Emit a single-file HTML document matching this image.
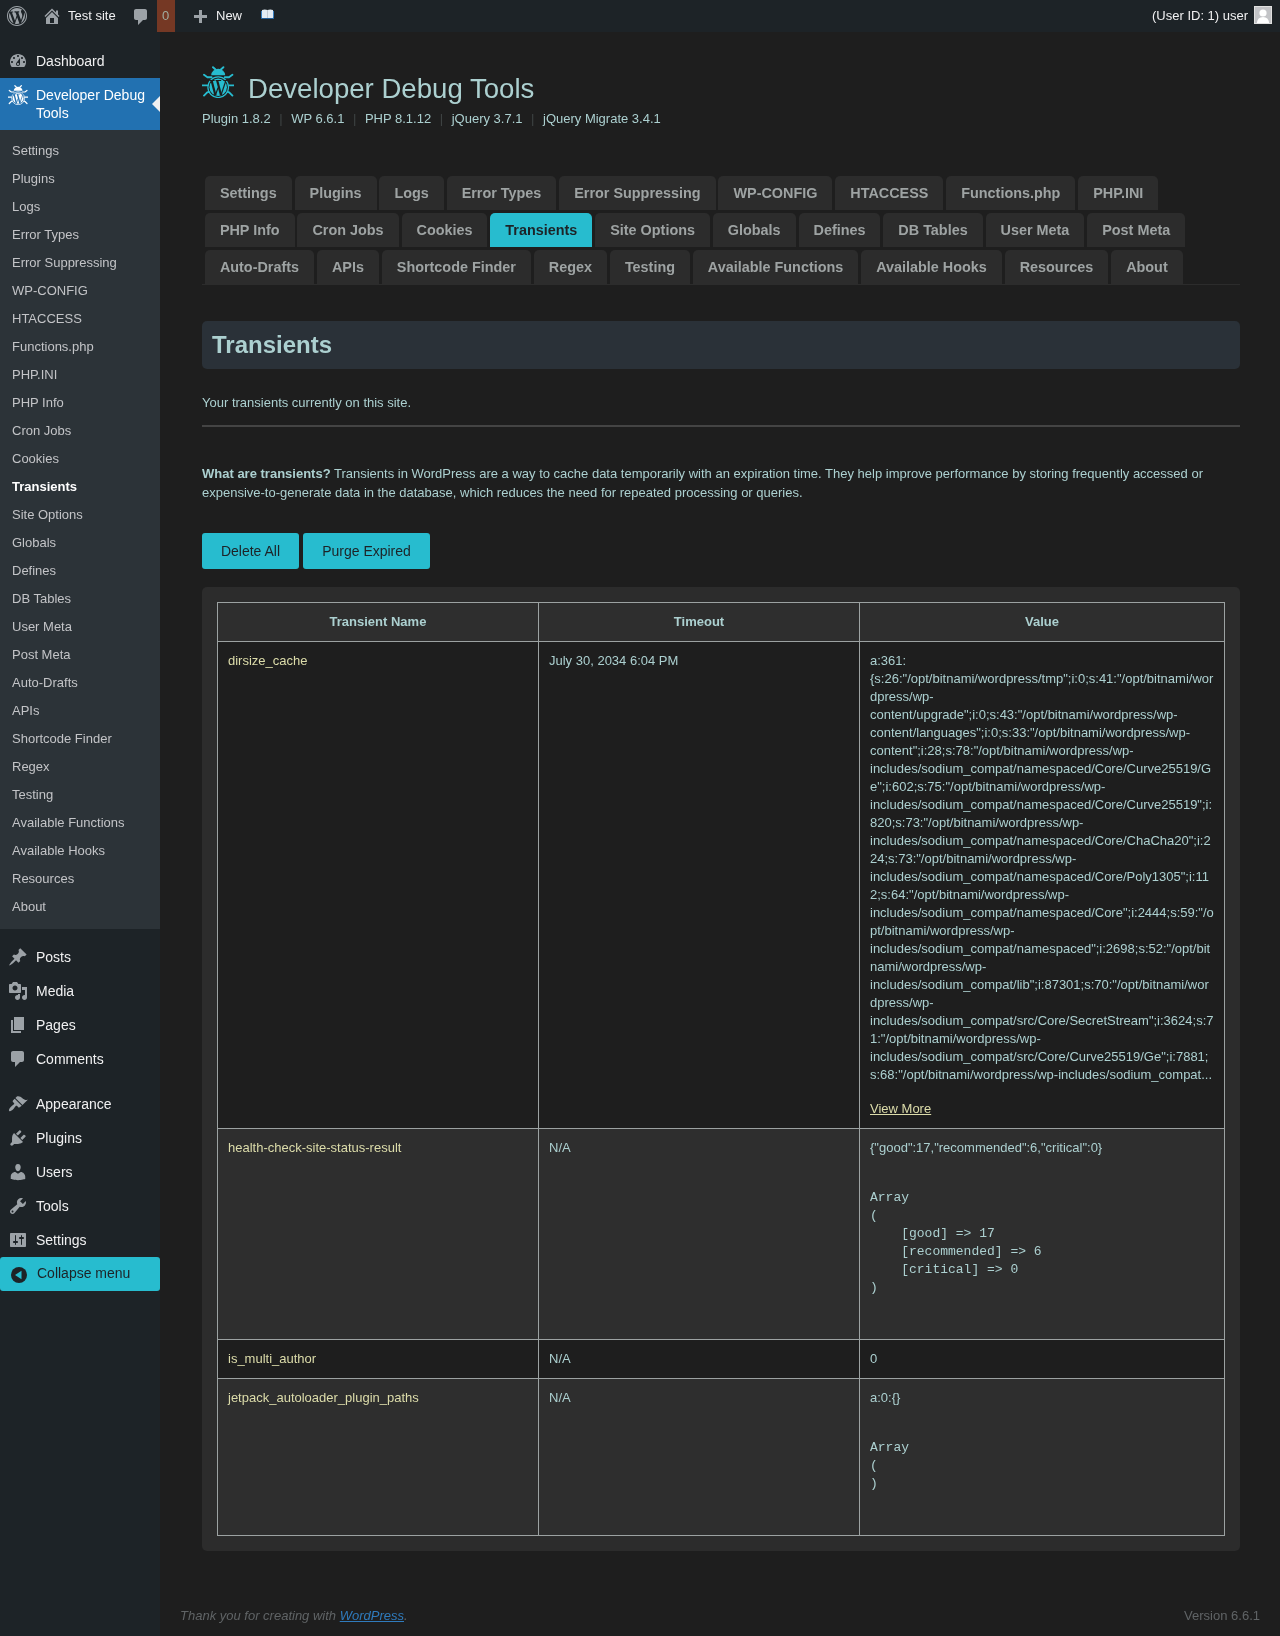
<!DOCTYPE html>
<html>
<head>
<meta charset="utf-8">
<style>
*{box-sizing:border-box;}
html,body{margin:0;padding:0;}
body{width:1280px;height:1636px;overflow:hidden;background:#1e1e1e;font-family:"Liberation Sans",sans-serif;font-size:13px;color:#acd0d0;position:relative;}
#ab{position:absolute;left:0;top:0;width:1280px;height:32px;background:#1d2327;color:#f0f0f1;}
#ab .t{position:absolute;top:7px;line-height:18px;font-size:13px;white-space:nowrap;}
#ab svg{position:absolute;}
#menu{position:absolute;left:0;top:32px;width:160px;height:1604px;background:#1d2327;}
.mi{position:absolute;left:0;width:160px;height:34px;color:#f0f0f1;font-size:14px;line-height:18px;}
.mi .n{position:absolute;left:36px;top:8px;white-space:nowrap;}
.mi svg{position:absolute;left:8px;top:7px;}
#sub{position:absolute;left:0;top:98px;width:160px;height:799px;background:#2c3338;}
#sub div{position:absolute;left:12px;height:28px;line-height:18px;font-size:13px;color:#c3c4c7;white-space:nowrap;}
#content{position:absolute;left:202px;top:0;width:1038px;}
.abs{position:absolute;white-space:nowrap;}
#title{position:absolute;left:46px;top:73px;font-size:27.6px;line-height:32px;color:#acd0d0;white-space:nowrap;}
#ver{position:absolute;left:0;top:110px;line-height:18px;font-size:13px;color:#acd0d0;white-space:nowrap;}
#ver .s{display:inline-block;width:20.5px;text-align:center;color:#3e4444;}
#tabs{position:absolute;left:0;top:173px;width:1038px;border-bottom:1px solid #2c2c2c;}
#tabs:after{content:"";display:block;clear:both;}
.tab{float:left;margin:3px 0 0 2.88px;padding:5px 15px;line-height:24px;font-size:14.4px;font-weight:bold;color:#9ea3a3;background:#2c2c2c;border-radius:5px 5px 0 0;white-space:nowrap;}
.tab.on{background:#27bccf;color:#1d2327;}
#hbox{position:absolute;left:0;top:321px;width:1038px;height:48px;background:#2a3138;border-radius:5px;}
#hbox div{position:absolute;left:10px;top:0;font-size:24px;line-height:48px;font-weight:bold;color:#acd0d0;}
#p1{position:absolute;left:0;top:393px;line-height:19px;}
#hr{position:absolute;left:0;top:425px;width:1038px;height:2px;background:#444;}
#p2{position:absolute;left:0;top:463.5px;width:1038px;line-height:19px;}
.btn{position:absolute;top:533px;height:36px;line-height:36px;font-size:14px;color:#1d2327;background:#27bccf;border-radius:3px;text-align:center;white-space:nowrap;}

#tbl{position:absolute;left:15px;top:15px;width:1007px;border-collapse:collapse;table-layout:fixed;}
#tbl td,#tbl th{border:1px solid #9ca2a2;padding:10px;vertical-align:top;line-height:18px;font-size:13px;text-align:left;color:#acd0d0;}
#tbl th{text-align:center;font-weight:bold;background:#2e2e2e;}
#tbl tr.d td{background:#1e1e1e;}
#tbl tr.l td{background:#2e2e2e;}
#tbl td.nm{color:#dcdcaa;}
#tbl .nw{white-space:nowrap;}
#tbl pre{margin:32px 0;font-family:"Liberation Mono",monospace;font-size:13px;line-height:18px;}
#tbl a{color:#dcdcaa;text-decoration:underline;}
#foot{position:absolute;left:180px;top:1607px;line-height:18px;font-size:13px;font-style:italic;color:#606466;white-space:nowrap;}
#foot a{color:#2f7bbd;text-decoration:underline;}
#ver2{position:absolute;right:20px;top:1607px;line-height:18px;font-size:13px;color:#606466;white-space:nowrap;}
#tbox{position:absolute;left:0;top:587px;width:1038px;height:964px;background:#2c2c2c;border-radius:5px;}

</style>
</head>
<body>
<div id="wrapall" style="position:absolute;left:0;top:0;width:1280px;height:1636px;overflow:hidden;will-change:transform;">
<div id="ab">
<svg style="left:7px;top:6px" width="20" height="20" viewBox="0 0 20 20"><path fill="#9ca2a7" d="M20 10c0-5.52-4.48-10-10-10S0 4.48 0 10s4.48 10 10 10 10-4.48 10-10zM10 1.01c4.97 0 8.99 4.02 8.99 8.99s-4.02 8.99-8.99 8.99S1.01 14.97 1.01 10 5.030 1.01 10 1.01zM8.01 14.82L4.96 6.61c.49-.03 1.05-.08 1.05-.08.43-.05.38-1.010-.06-.99 0 0-1.29.1-2.13.1-.15 0-.33 0-.52-.01 1.44-2.170 3.9-3.6 6.7-3.6 2.09 0 3.990.79 5.41 2.09-.6-.08-1.45.35-1.45 1.42 0 .66.38 1.22.79 1.88.31.54.5 1.22.5 2.21 0 1.34-1.27 4.48-1.27 4.48l-2.71-7.5c.48-.03.75-.16.75-.16.43-.05.38-1.1-.05-1.08 0 0-1.3.11-2.14.11-.78 0-2.11-.11-2.11-.11-.43-.02-.48 1.06-.05 1.08l.84.08 1.12 3.04zm6.02 2.15L16.64 10s.67-1.69.39-3.81c.63 1.14.94 2.42.94 3.81 0 2.96-1.56 5.58-3.94 6.97zM2.68 6.77L6.5 17.25c-2.67-1.3-4.47-4.08-4.47-7.25 0-1.16.2-2.23.65-3.23zm7.45 4.53l2.29 6.25c-.75.27-1.57.42-2.42.42-.72 0-1.41-.11-2.060-.3z"/></svg>
<svg style="left:42px;top:6px" width="20" height="20" viewBox="0 0 20 20"><path fill="#9ca2a7" d="M16 8.5l1.53 1.53-1.06 1.06L10 4.62l-6.47 6.47-1.06-1.06L10 2.5l4 4v-2h2v4zm-6-2.46l6 5.99V18H4v-5.97zM12 17v-5H8v5h4z"/></svg>
<div class="t" style="left:68px">Test site</div>
<svg style="left:131px;top:7px" width="20" height="20" viewBox="0 0 20 20"><path fill="#9ca2a7" d="M5 2h9c1.1 0 2 .9 2 2v7c0 1.1-.9 2-2 2h-2l-5 5v-5H5c-1.1 0-2-.9-2-2V4c0-1.1.9-2 2-2z"/></svg>
<div style="position:absolute;left:157px;top:0;width:18px;height:32px;background:#753824;"></div>
<div class="t" style="left:160.5px;width:10px;text-align:center;color:#a0aca0">0</div>
<svg style="left:194px;top:10px" width="13" height="13" viewBox="0 0 13 13"><path fill="#9ca2a7" d="M5 0 H8 V5 H13 V8 H8 V13 H5 V8 H0 V5 H5 Z"/></svg>
<div class="t" style="left:216px">New</div>
<svg style="left:261px;top:9px" width="13" height="10" viewBox="0 0 13 10"><path fill="#3a7fc0" d="M0 2 H13 V9 Q13 10 12 10 H1 Q0 10 0 9 Z"/><path fill="#245f99" d="M0 8.6 H13 V9 Q13 10 12 10 H1 Q0 10 0 9 Z"/><path fill="#e4ecf4" d="M1 1 Q3.8 0 6.5 1 V9 H1 Z M6.5 1 Q9.2 0 12 1 V9 H6.5 Z"/><path stroke="#a9b4bd" stroke-width="0.6" d="M6.5 1 V9"/></svg>
<div class="t" style="left:1152px">(User ID: 1) user</div>
<div style="position:absolute;left:1254px;top:6px;width:18px;height:18px;background:#c3c4c7;border:1px solid #e0e0e0;overflow:hidden"><svg width="16" height="16" viewBox="0 0 16 16" style="position:absolute;left:0;top:0"><circle cx="8" cy="6" r="3.6" fill="#fff"/><path d="M1.8 16 Q2.5 10 8 10 Q13.5 10 14.2 16 Z" fill="#fff"/></svg></div>
</div>
<div id="menu"><div class="mi" style="top:12px"><svg width="20" height="20" viewBox="0 0 20 20"><path fill="#9ca2a7" d="M3.76 16h12.48c1.1-1.37 1.76-3.11 1.76-5 0-4.42-3.58-8-8-8s-8 3.58-8 8c0 1.890.66 3.63 1.76 5zM10 4c.55 0 1 .45 1 1s-.45 1-1 1-1-.45-1-1 .45-1 1-1zM6 6c.55 0 1 .45 1 1s-.45 1-1 1-1-.45-1-1 .45-1 1-1zm8 0c.55 0 1 .45 1 1s-.45 1-1 1-1-.45-1-1 .45-1 1-1zm-5.37 5.55L12 7v6c0 1.1-.9 2-2 2s-2-.9-2-2c0-.57.24-1.08.63-1.45zM4 10c.55 0 1 .45 1 1s-.45 1-1 1-1-.45-1-1 .45-1 1-1zm12 0c.55 0 1 .45 1 1s-.45 1-1 1-1-.45-1-1 .45-1 1-1zm-5 3c0-.55-.45-1-1-1s-1 .45-1 1 .45 1 1 1 1-.45 1-1z"/></svg><div class="n">Dashboard</div></div><div class="mi" style="top:46px;height:52px;background:#2271b1;color:#fff"><svg width="20" height="20" viewBox="0 0 32 32" style="left:8px;top:7px"><g fill="none" stroke="#fff" stroke-width="1.9" stroke-linecap="round" stroke-linejoin="round"><path d="M11 1.2 L13.5 3.5 M21.4 1.2 L18.9 3.5 M2 8.8 L5.4 11.2 L9.6 11.2 M30.4 8.8 L27 11.2 L22.8 11.2 M0.6 19.4 L5.2 19.4 M31.8 19.4 L27.2 19.4 M2 29.6 L5.2 26.4 L6.8 25.8 M30.4 29.6 L27.2 26.4 L25.6 25.8"/></g><path fill="#fff" d="M9.2 9.2 A7 6.4 0 0 1 23.2 9.2 Z"/><circle cx="16.2" cy="21.2" r="10.3" fill="none" stroke="#fff" stroke-width="1.2"/><circle cx="16.2" cy="21.2" r="8.7" fill="#fff"/><g stroke="#2271b1" fill="none" stroke-linejoin="miter"><path d="M7.6 14.5 H12.6 M13.6 14.5 H19.2 M21.4 14.5 H25" stroke-width="1"/><path d="M9.6 14.5 L13.4 29.2" stroke-width="2.2"/><path d="M15.2 14.5 L19 29.2" stroke-width="2.2"/><path d="M13.4 29.2 L16.1 21.6" stroke-width="1.2"/><path d="M19 29.2 L23.6 15.4" stroke-width="1.2"/></g></svg><div class="n" style="width:120px;white-space:normal">Developer Debug Tools</div><div style="position:absolute;right:0;top:18px;width:0;height:0;border:8px solid transparent;border-right-color:#f0f0f1"></div></div><div id="sub"><div style="top:12px">Settings</div><div style="top:40px">Plugins</div><div style="top:68px">Logs</div><div style="top:96px">Error Types</div><div style="top:124px">Error Suppressing</div><div style="top:152px">WP-CONFIG</div><div style="top:180px">HTACCESS</div><div style="top:208px">Functions.php</div><div style="top:236px">PHP.INI</div><div style="top:264px">PHP Info</div><div style="top:292px">Cron Jobs</div><div style="top:320px">Cookies</div><div style="top:348px;color:#fff;font-weight:bold">Transients</div><div style="top:376px">Site Options</div><div style="top:404px">Globals</div><div style="top:432px">Defines</div><div style="top:460px">DB Tables</div><div style="top:488px">User Meta</div><div style="top:516px">Post Meta</div><div style="top:544px">Auto-Drafts</div><div style="top:572px">APIs</div><div style="top:600px">Shortcode Finder</div><div style="top:628px">Regex</div><div style="top:656px">Testing</div><div style="top:684px">Available Functions</div><div style="top:712px">Available Hooks</div><div style="top:740px">Resources</div><div style="top:768px">About</div></div><div class="mi" style="top:908px"><svg width="20" height="20" viewBox="0 0 20 20"><path fill="#9ca2a7" d="M10.44 3.02l1.82-1.82 6.36 6.35-1.83 1.82c-1.050-.68-2.480-.57-3.410.36l-.75.75c-.92.93-1.040 2.350-.35 3.410l-1.830 1.820-2.410-2.410-2.800 2.790c-.42.42-3.380 2.710-3.800 2.290s1.860-3.390 2.280-3.810l2.790-2.790L4.100 9.360l1.830-1.820c1.050.69 2.480.57 3.400-.36l.75-.75c.93-.92 1.050-2.350.36-3.410z"/></svg><div class="n">Posts</div></div><div class="mi" style="top:942px"><svg width="20" height="20" viewBox="0 0 20 20"><path fill="#9ca2a7" d="M13 11V4c0-.55-.45-1-1-1h-1.67L9 1H5L3.67 3H2c-.55 0-1 .45-1 1v7c0 .55.45 1 1 1h10c.55 0 1-.45 1-1zM7 4.5c1.38 0 2.5 1.12 2.5 2.5S8.38 9.5 7 9.5 4.5 8.38 4.5 7 5.62 4.5 7 4.5zM14 6h5v10.5c0 1.38-1.12 2.5-2.5 2.5S14 17.88 14 16.5s1.12-2.5 2.5-2.5c.17 0 .34.02.5.05V9h-3V6zm-4 8.05V13h2v3.5c0 1.38-1.12 2.5-2.5 2.5S7 17.880 7 16.5 8.12 14 9.5 14c.17 0 .34.02.5.05z"/></svg><div class="n">Media</div></div><div class="mi" style="top:976px"><svg width="20" height="20" viewBox="0 0 20 20"><path fill="#9ca2a7" d="M6 15V2h10v13H6zm-1 1h8v2H3V5h2v11z"/></svg><div class="n">Pages</div></div><div class="mi" style="top:1010px"><svg width="20" height="20" viewBox="0 0 20 20"><path fill="#9ca2a7" d="M5 2h9c1.1 0 2 .9 2 2v7c0 1.1-.9 2-2 2h-2l-5 5v-5H5c-1.1 0-2-.9-2-2V4c0-1.1.9-2 2-2z"/></svg><div class="n">Comments</div></div><div class="mi" style="top:1055px"><svg width="20" height="20" viewBox="0 0 20 20"><path fill="#9ca2a7" d="M14.48 11.06L7.41 3.99l1.5-1.5c.5-.56 2.3-.47 3.51.32 1.21.8 1.43 1.28 2.91 2.1 1.18.64 2.45 1.26 4.45.85zm-.71.71L6.7 4.7 4.93 6.47c-.39.39-.39 1.02 0 1.41l1.06 1.06c.39.39.39 1.03 0 1.42-.6.6-1.43 1.11-2.21 1.69-.35.26-.7.53-1.01.84C1.43 14.23.4 16.08 1.2 16.89c.8.79 2.65-.23 4.01-1.57.31-.31.58-.66.85-1.02.57-.78 1.08-1.61 1.69-2.21.39-.39 1.02-.39 1.41 0l1.06 1.06c.39.39 1.02.39 1.41 0z"/></svg><div class="n">Appearance</div></div><div class="mi" style="top:1089px"><svg width="20" height="20" viewBox="0 0 20 20"><path fill="#9ca2a7" d="M13.11 4.36L9.87 7.6 8 5.73l3.24-3.24c.35-.34 1.05-.2 1.56.32.52.51.66 1.21.31 1.55zm-8 1.77l.91-1.12 9.01 9.01-1.19.84c-.71.71-2.630 1.16-3.820 1.16H6.14L4.9 17.26c-.59.59-1.54.59-2.12 0-.59-.58-.59-1.53 0-2.12l1.24-1.24v-3.88c0-1.13.4-3.19 1.09-3.89zm7.26 3.97l3.24-3.24c.34-.35 1.04-.21 1.55.31.52.51.66 1.21.31 1.55l-3.24 3.25z"/></svg><div class="n">Plugins</div></div><div class="mi" style="top:1123px"><svg width="20" height="20" viewBox="0 0 20 20"><path fill="#9ca2a7" d="M10 9.25c-2.27 0-2.73-3.44-2.73-3.44C7 4.02 7.82 2 9.97 2c2.16 0 2.98 2.02 2.710 3.81 0 0-.41 3.44-2.68 3.44zm0 2.57L12.72 10c2.39 0 4.52 2.33 4.52 4.53v2.49s-3.65 1.13-7.24 1.13c-3.65 0-7.24-1.13-7.24-1.13v-2.49c0-2.25 1.94-4.48 4.47-4.48z"/></svg><div class="n">Users</div></div><div class="mi" style="top:1157px"><svg width="20" height="20" viewBox="0 0 20 20"><path fill="#9ca2a7" d="M16.68 9.77c-1.34 1.34-3.3 1.67-4.95.99l-5.41 6.52c-.99.99-2.59.99-3.58 0s-.99-2.59 0-3.57l6.52-5.42c-.68-1.65-.35-3.61.99-4.95 1.28-1.28 3.12-1.62 4.72-1.06l-2.89 2.89 2.82 2.82 2.86-2.87c.53 1.58.18 3.39-1.08 4.65zM3.81 16.21c.4.39 1.04.39 1.43 0 .4-.4.4-1.04 0-1.43-.39-.4-1.03-.4-1.43 0-.39.39-.39 1.03 0 1.43z"/></svg><div class="n">Tools</div></div><div class="mi" style="top:1191px"><svg width="20" height="20" viewBox="0 0 20 20"><path fill="#9ca2a7" d="M18 16V4c0-.55-.45-1-1-1H3c-.55 0-1 .45-1 1v12c0 .55.45 1 1 1h14c.55 0 1-.45 1-1zM8 11h1c.55 0 1 .45 1 1s-.45 1-1 1H8v1.5c0 .28-.22.5-.5.5s-.5-.22-.5-.5V13H6c-.55 0-1-.45-1-1s.45-1 1-1h1V5.5c0-.28.22-.5.5-.5s.5.22.5.5V11zm5-2h-1c-.55 0-1-.45-1-1s.45-1 1-1h1V5.5c0-.28.22-.5.5-.5s.5.22.5.5V7h1c.55 0 1 .45 1 1s-.45 1-1 1h-1v5.5c0 .28-.22.5-.5.5s-.5-.22-.5-.5V9z"/></svg><div class="n">Settings</div></div><div class="mi" style="top:1225px;height:34px;background:#27bccf;color:#1d2327;border-radius:3px"><svg width="20" height="20" viewBox="0 0 20 20" style="left:9px;top:8px"><circle cx="10" cy="10" r="8" fill="#1d2327"/><path d="M6 10 L12.5 5.8 V14.2 Z" fill="#27bccf"/></svg><div class="n" style="left:37px;top:7px">Collapse menu</div></div></div>
<div id="content">
<svg class="abs" style="left:0;top:66px" width="32" height="32" viewBox="0 0 32 32"><g fill="none" stroke="#27bccf" stroke-width="1.9" stroke-linecap="round" stroke-linejoin="round"><path d="M11 1.2 L13.5 3.5 M21.4 1.2 L18.9 3.5 M2 8.8 L5.4 11.2 L9.6 11.2 M30.4 8.8 L27 11.2 L22.8 11.2 M0.6 19.4 L5.2 19.4 M31.8 19.4 L27.2 19.4 M2 29.6 L5.2 26.4 L6.8 25.8 M30.4 29.6 L27.2 26.4 L25.6 25.8"/></g><path fill="#27bccf" d="M9.2 9.2 A7 6.4 0 0 1 23.2 9.2 Z"/><circle cx="16.2" cy="21.2" r="10.3" fill="none" stroke="#27bccf" stroke-width="1.2"/><circle cx="16.2" cy="21.2" r="8.7" fill="#27bccf"/><g stroke="#1e1e1e" fill="none" stroke-linejoin="miter"><path d="M7.6 14.5 H12.6 M13.6 14.5 H19.2 M21.4 14.5 H25" stroke-width="1"/><path d="M9.6 14.5 L13.4 29.2" stroke-width="2.2"/><path d="M15.2 14.5 L19 29.2" stroke-width="2.2"/><path d="M13.4 29.2 L16.1 21.6" stroke-width="1.2"/><path d="M19 29.2 L23.6 15.4" stroke-width="1.2"/></g></svg>
<div id="title">Developer Debug Tools</div>
<div id="ver">Plugin 1.8.2<span class="s">|</span>WP 6.6.1<span class="s">|</span>PHP 8.1.12<span class="s">|</span>jQuery 3.7.1<span class="s">|</span>jQuery Migrate 3.4.1</div>
<div id="tabs"><div class="tab">Settings</div><div class="tab">Plugins</div><div class="tab">Logs</div><div class="tab">Error Types</div><div class="tab">Error Suppressing</div><div class="tab">WP-CONFIG</div><div class="tab">HTACCESS</div><div class="tab">Functions.php</div><div class="tab">PHP.INI</div><div class="tab">PHP Info</div><div class="tab">Cron Jobs</div><div class="tab">Cookies</div><div class="tab on">Transients</div><div class="tab">Site Options</div><div class="tab">Globals</div><div class="tab">Defines</div><div class="tab">DB Tables</div><div class="tab">User Meta</div><div class="tab">Post Meta</div><div class="tab">Auto-Drafts</div><div class="tab">APIs</div><div class="tab">Shortcode Finder</div><div class="tab">Regex</div><div class="tab">Testing</div><div class="tab">Available Functions</div><div class="tab">Available Hooks</div><div class="tab">Resources</div><div class="tab">About</div></div>
<div id="hbox"><div>Transients</div></div>
<div id="p1">Your transients currently on this site.</div>
<div id="hr"></div>
<div id="p2"><b>What are transients?</b> Transients in WordPress are a way to cache data temporarily with an expiration time. They help improve performance by storing frequently accessed or expensive-to-generate data in the database, which reduces the need for repeated processing or queries.</div>
<div class="btn" style="left:0;width:97px">Delete All</div>
<div class="btn" style="left:101px;width:127px">Purge Expired</div>
<div id="tbox"><table id="tbl"><colgroup><col style="width:321px"><col style="width:321px"><col style="width:365px"></colgroup>
<tr><th>Transient Name</th><th>Timeout</th><th>Value</th></tr>
<tr class="d"><td class="nm">dirsize_cache</td><td>July 30, 2034 6:04 PM</td><td><div class="nw">a:361:<br>{s:26:&quot;/opt/bitnami/wordpress/tmp&quot;;i:0;s:41:&quot;/opt/bitnami/wor<br>dpress/wp-<br>content/upgrade&quot;;i:0;s:43:&quot;/opt/bitnami/wordpress/wp-<br>content/languages&quot;;i:0;s:33:&quot;/opt/bitnami/wordpress/wp-<br>content&quot;;i:28;s:78:&quot;/opt/bitnami/wordpress/wp-<br>includes/sodium_compat/namespaced/Core/Curve25519/G<br>e&quot;;i:602;s:75:&quot;/opt/bitnami/wordpress/wp-<br>includes/sodium_compat/namespaced/Core/Curve25519&quot;;i:<br>820;s:73:&quot;/opt/bitnami/wordpress/wp-<br>includes/sodium_compat/namespaced/Core/ChaCha20&quot;;i:2<br>24;s:73:&quot;/opt/bitnami/wordpress/wp-<br>includes/sodium_compat/namespaced/Core/Poly1305&quot;;i:11<br>2;s:64:&quot;/opt/bitnami/wordpress/wp-<br>includes/sodium_compat/namespaced/Core&quot;;i:2444;s:59:&quot;/o<br>pt/bitnami/wordpress/wp-<br>includes/sodium_compat/namespaced&quot;;i:2698;s:52:&quot;/opt/bit<br>nami/wordpress/wp-<br>includes/sodium_compat/lib&quot;;i:87301;s:70:&quot;/opt/bitnami/wor<br>dpress/wp-<br>includes/sodium_compat/src/Core/SecretStream&quot;;i:3624;s:7<br>1:&quot;/opt/bitnami/wordpress/wp-<br>includes/sodium_compat/src/Core/Curve25519/Ge&quot;;i:7881;<br>s:68:&quot;/opt/bitnami/wordpress/wp-includes/sodium_compat...</div><div style="margin-top:16px"><a>View More</a></div></td></tr>
<tr class="l"><td class="nm">health-check-site-status-result</td><td>N/A</td><td>{&quot;good&quot;:17,&quot;recommended&quot;:6,&quot;critical&quot;:0}<pre>Array
(
    [good] =&gt; 17
    [recommended] =&gt; 6
    [critical] =&gt; 0
)</pre></td></tr>
<tr class="d"><td class="nm">is_multi_author</td><td>N/A</td><td>0</td></tr>
<tr class="l"><td class="nm">jetpack_autoloader_plugin_paths</td><td>N/A</td><td>a:0:{}<pre>Array
(
)</pre></td></tr>
</table></div>
</div>
<div id="foot">Thank you for creating with <a>WordPress</a>.</div><div id="ver2">Version 6.6.1</div>
</div>
</body>
</html>
